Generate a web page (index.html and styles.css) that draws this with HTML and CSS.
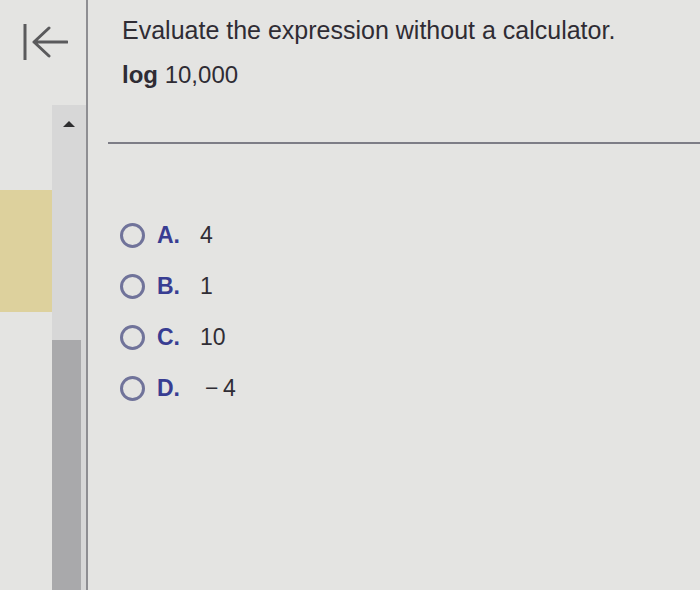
FILE: index.html
```html
<!DOCTYPE html>
<html>
<head>
<meta charset="utf-8">
<link rel="stylesheet" href="styles.css">
</head>
<body>
<div class="page">
  <aside class="side">
    <div class="back">
      <svg width="46" height="40" viewBox="0 0 46 40">
        <line x1="3" y1="2" x2="3" y2="38" stroke="#5a5a5c" stroke-width="3"/>
        <path d="M27 6 L12 20 L27 34 M12 20 H45" fill="none" stroke="#5a5a5c" stroke-width="3" stroke-linecap="round" stroke-linejoin="round"/>
      </svg>
    </div>
    <div class="lower">
      <div class="hilite-col">
        <div class="hilite"></div>
      </div>
      <div class="track">
        <div class="arrow"></div>
        <div class="thumb"></div>
      </div>
    </div>
  </aside>
  <main class="main">
    <p class="prompt">Evaluate the expression without a calculator.</p>
    <p class="expr"><b>log</b> 10,000</p>
    <hr class="rule">
    <ul class="opts">
      <li><span class="radio"></span><span class="lbl">A.</span><span class="val">4</span></li>
      <li><span class="radio"></span><span class="lbl">B.</span><span class="val">1</span></li>
      <li><span class="radio"></span><span class="lbl">C.</span><span class="val">10</span></li>
      <li><span class="radio"></span><span class="lbl">D.</span><span class="val neg">&minus;&thinsp;4</span></li>
    </ul>
  </main>
</div>
</body>
</html>
```
FILE: styles.css
```css
html, body { margin: 0; padding: 0; }
body {
  width: 700px; height: 590px; overflow: hidden;
  background: #e4e4e2;
  font-family: "Liberation Sans", Arial, sans-serif;
  color: #2f2c34;
}
.page { display: grid; grid-template-columns: 88px 1fr; height: 590px; }
.side {
  border-right: 2px solid #8e8e92;
  display: flex; flex-direction: column;
}
.back { height: 105px; padding: 22px 0 0 22px; box-sizing: border-box; }
.lower { flex: 1; display: flex; }
.hilite-col { width: 52px; padding-top: 85px; }
.hilite { height: 122px; background: #ddd19d; }
.track {
  flex: 1; background: #d7d7d7;
  display: flex; flex-direction: column; align-items: center;
}
.arrow {
  margin-top: 16px;
  width: 0; height: 0;
  border-left: 6px solid transparent; border-right: 6px solid transparent;
  border-bottom: 6px solid #2e2e30;
}
.thumb {
  margin-top: 213px; width: 29px; flex: 1;
  background: #a9a9ab; align-self: flex-start;
}
.main { padding: 14px 0 0 34px; }
.prompt { margin: 0; font-size: 25px; line-height: 32px; }
.expr { margin: 13px 0 0 0; font-size: 24px; line-height: 32px; }
.expr b { font-weight: bold; }
.rule {
  margin: 51px 0 0 -14px; border: 0; border-top: 2px solid #7d7d86; height: 0;
}
.opts { list-style: none; margin: 66px 0 0 -2px; padding: 0; }
.opts li { display: flex; align-items: center; height: 51px; font-size: 23px; }
.radio {
  width: 19px; height: 19px; border: 3px solid #70739a; border-radius: 50%;
  margin-right: 12px;
}
.lbl { color: #383d92; font-weight: bold; width: 43px; }
.val { color: #302d35; }
.neg { padding-left: 5px; }
```
